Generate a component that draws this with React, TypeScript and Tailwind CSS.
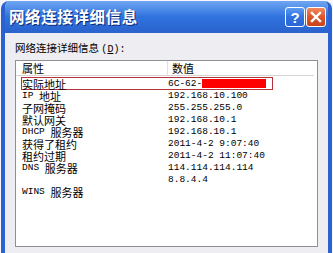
import React from 'react';

const Lat = ({ children }: { children: React.ReactNode }) => (
	<span className="font-['Liberation_Mono'] text-[9.5px] leading-[12px]">{children}</span>
);

const rows: [React.ReactNode, string][] = [
	['实际地址', '6C-62-'],
	[<><Lat>IP&nbsp;</Lat><span>地址</span></>, '192.168.10.100'],
	['子网掩码', '255.255.255.0'],
	['默认网关', '192.168.10.1'],
	[<><Lat>DHCP&nbsp;</Lat><span>服务器</span></>, '192.168.10.1'],
	['获得了租约', '2011-4-2 9:07:40'],
	['租约过期', '2011-4-2 11:07:40'],
	[<><Lat>DNS&nbsp;</Lat><span>服务器</span></>, '114.114.114.114'],
	['', '8.8.4.4'],
	[<><Lat>WINS&nbsp;</Lat><span>服务器</span></>, ''],
];

const TitleButton = ({ kind }: { kind: 'help' | 'close' }) => (
	<div
		className={`w-[20px] h-[20px] rounded-[3px] border border-white flex items-center justify-center ${
			kind === 'help'
				? 'bg-gradient-to-b from-[#5c9cf5] via-[#2f72e0] to-[#2a66d6]'
				: 'bg-gradient-to-b from-[#f0885c] via-[#de5428] to-[#c8421c]'
		}`}
	>
		{kind === 'help' ? (
			<span className="text-white font-bold text-[15px] leading-none font-['Liberation_Sans',sans-serif]">?</span>
		) : (
			<svg width="12" height="12" viewBox="0 0 12 12">
				<path d="M2 2 L10 10 M10 2 L2 10" stroke="white" strokeWidth="2.4" strokeLinecap="square" />
			</svg>
		)}
	</div>
);

export default function App() {
	return (
		<div className="w-[333px] h-[253px] bg-[#f4f6fb] overflow-hidden font-['Noto_Sans_CJK_SC',sans-serif]">
			<div className="h-full flex flex-col rounded-t-[8px] overflow-hidden border-x-[4px] border-[#2c62cf] mt-[1px] ml-[1px] mr-[1px]">
				<div className="h-[32px] shrink-0 flex items-center justify-between pl-[4px] pr-[2px] bg-gradient-to-b from-[#6fa6f2] via-[#2f72de] to-[#2a63cc]">
					<span className="text-white font-bold text-[15.5px] tracking-[0.6px] [text-shadow:1px_1px_0_#0a2a7a]">
						网络连接详细信息
					</span>
					<div className="flex gap-[1px]">
						<TitleButton kind="help" />
						<TitleButton kind="close" />
					</div>
				</div>
				<div className="flex-1 bg-[#eeedf1] pl-[10px] pr-[10px] pt-[8px] flex flex-col">
					<div className="text-[10.5px] leading-[14px] text-black">
						网络连接详细信息 <span className="font-['Liberation_Mono'] text-[10px]">(<span className="underline">D</span>):</span>
					</div>
					<div className="mt-[3px] h-[187px] bg-white border border-[#8f8f94] pr-[3px] flex flex-col">
						<div className="flex h-[15px] shrink-0 border-b border-[#d5d5d5] text-[11px] leading-[15px] text-black">
							<div className="w-[152px] pl-[6px] border-r border-[#e2e2e2]">属性</div>
							<div className="flex-1 pl-[4px]">数值</div>
						</div>
						<div className="pl-[5px] pt-[1px]">
							{rows.map(([k, v], i) => (
								<div
									key={i}
									className={`flex items-center w-[252px] text-[11px] leading-[12px] text-black border ${
										i === 0 ? 'border-[#b4323a] h-[13px]' : 'border-transparent h-[12px]'
									}`}
								>
									<div className="w-[146px] shrink-0 whitespace-nowrap flex items-center h-[12px]">{k}</div>
									<div className="flex items-center h-[12px] font-['Liberation_Mono'] text-[9.5px] whitespace-nowrap">
										{v}
										{i === 0 && <span className="inline-block w-[64px] h-[9px] bg-[#ff0000]" />}
									</div>
								</div>
							))}
						</div>
					</div>
				</div>
			</div>
		</div>
	);
}
